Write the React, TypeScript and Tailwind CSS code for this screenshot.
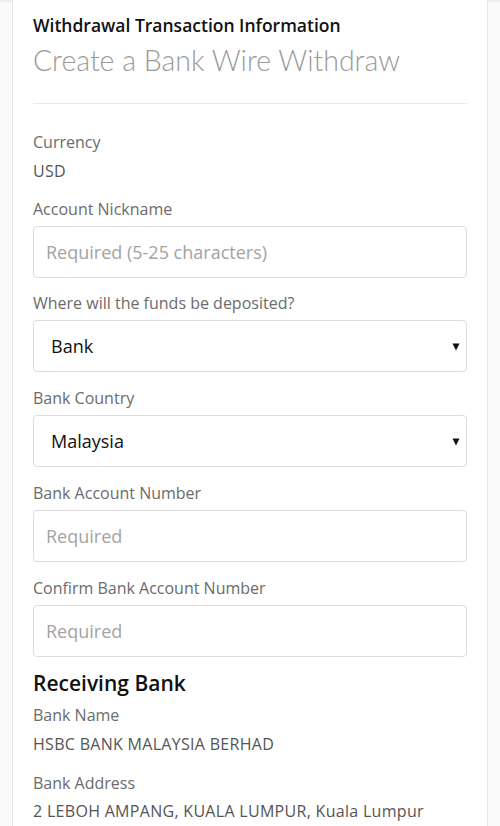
import { type ReactNode } from 'react';

function Label({ children }: { children: ReactNode }) {
    return <div className="text-[16px] leading-[22px] text-[#6b6b6b]">{children}</div>;
}

function Value({ children, className = '' }: { children: ReactNode; className?: string }) {
    return <div className={`text-[16px] leading-[22px] tracking-[0.3px] text-[#555] ${className}`}>{children}</div>;
}

function TextInput({ placeholder }: { placeholder: string }) {
    return (
        <input
            className="mt-[6px] block h-[52px] w-full rounded-[4px] border border-[#dcdcdc] bg-white px-[12px] text-[18px] text-[#222] outline-none placeholder:text-[#a3a3a3]"
            placeholder={placeholder}
        />
    );
}

function Select({ value }: { value: string }) {
    return (
        <div className="mt-[6px] flex h-[52px] w-full items-center justify-between rounded-[4px] border border-[#dcdcdc] bg-white pl-[17px] pr-[6px]">
            <span className="text-[18px] text-[#111]">{value}</span>
            <svg width="8" height="9" viewBox="0 0 8 9">
                <path d="M0.5 1.5 H7.5 L4 8.5 Z" fill="#111" />
            </svg>
        </div>
    );
}

export default function App() {
    return (
        <div className="min-h-screen bg-[#f9f9f9]" style={{ fontFamily: '"Open Sans", Lato, sans-serif' }}>
            <div className="h-[3px] bg-gradient-to-b from-[#e9e9e9] to-[#f9f9f9]" />
            <div className="mx-3 -mt-[3px] min-h-[826px] border-x border-[#e6e6e6] bg-white px-5 pt-[13px]">
                <h2 className="text-[17.5px] font-semibold leading-[24px] text-[#111]">Withdrawal Transaction Information</h2>
                <h1
                    className="mt-[5px] text-[28.5px] font-light leading-[36px] text-[#9a9a9a]"
                    style={{ fontFamily: 'Lato, sans-serif' }}
                >
                    Create a Bank Wire Withdraw
                </h1>
                <div className="mt-[25px] h-px bg-[#e8e8e8]" />

                <div className="mt-[27px]">
                    <Label>Currency</Label>
                    <Value className="mt-[7px]">USD</Value>
                </div>

                <div className="mt-[16px]">
                    <Label>Account Nickname</Label>
                    <TextInput placeholder="Required (5-25 characters)" />
                </div>

                <div className="mt-[14px]">
                    <Label>Where will the funds be deposited?</Label>
                    <Select value="Bank" />
                </div>

                <div className="mt-[15px]">
                    <Label>Bank Country</Label>
                    <Select value="Malaysia" />
                </div>

                <div className="mt-[15px]">
                    <Label>Bank Account Number</Label>
                    <TextInput placeholder="Required" />
                </div>

                <div className="mt-[15px]">
                    <Label>Confirm Bank Account Number</Label>
                    <TextInput placeholder="Required" />
                </div>

                <h3 className="mt-[12px] text-[21px] font-semibold leading-[28px] text-[#111]">Receiving Bank</h3>

                <div className="mt-[7px]">
                    <Label>Bank Name</Label>
                    <Value className="mt-[7px]">HSBC BANK MALAYSIA BERHAD</Value>
                </div>

                <div className="mt-[17px]">
                    <Label>Bank Address</Label>
                    <Value className="mt-[6px]">2 LEBOH AMPANG, KUALA LUMPUR, Kuala Lumpur</Value>
                </div>
            </div>
        </div>
    );
}
